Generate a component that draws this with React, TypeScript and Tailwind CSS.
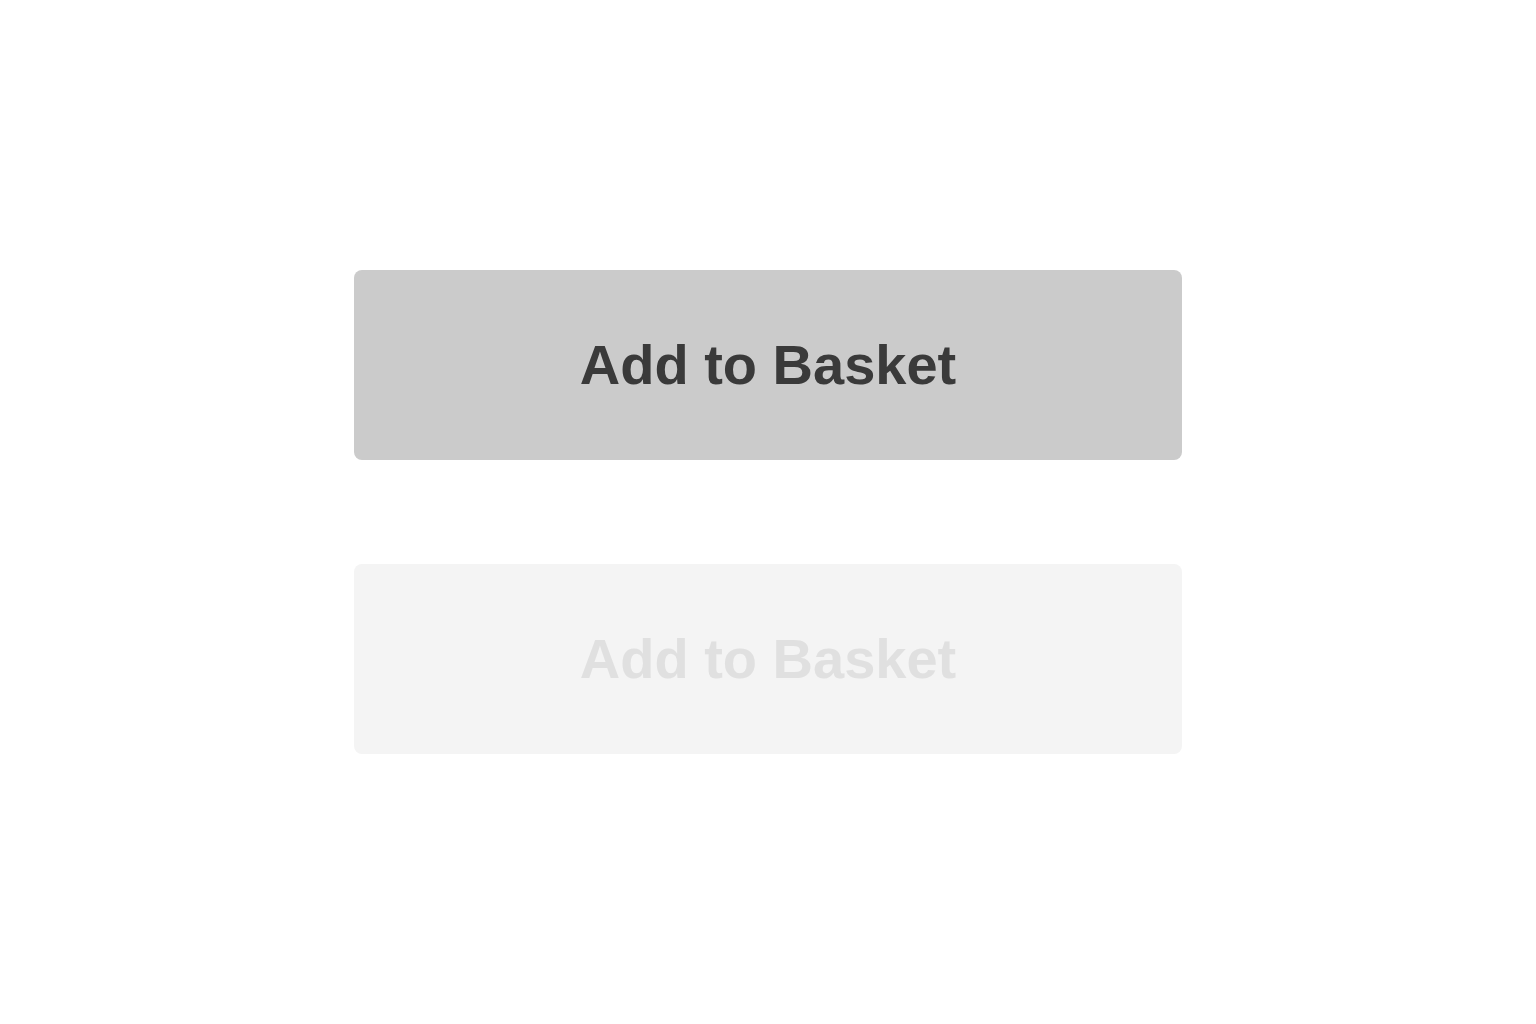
import React from "react";

const font = { fontFamily: '"Liberation Sans", Arial, sans-serif' };

export default function App() {
  return (
    <div className="h-screen w-full bg-white flex flex-col items-center justify-center gap-[104px]" style={font}>
      {/* Default state */}
      <button className="w-[828px] h-[190px] rounded-lg bg-[#cbcbcb] text-[#3a3a3a] text-[56px] font-bold leading-none">
        Add to Basket
      </button>
      {/* Disabled state */}
      <button
        disabled
        className="w-[828px] h-[190px] rounded-lg bg-[#f4f4f4] text-[#e0e0e0] text-[56px] font-bold leading-none"
      >
        Add to Basket
      </button>
    </div>
  );
}
